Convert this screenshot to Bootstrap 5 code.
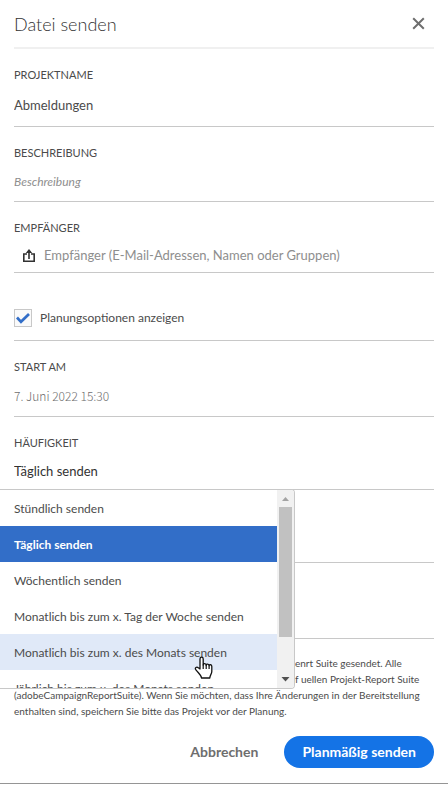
<!DOCTYPE html>
<html lang="de">
<head>
<meta charset="utf-8">
<meta name="viewport" content="width=device-width, initial-scale=1">
<title>Datei senden</title>
<link href="https://cdn.jsdelivr.net/npm/bootstrap@5.3.0/dist/css/bootstrap.min.css" rel="stylesheet">
<style>
body{font-family:Lato,"Noto Sans",sans-serif;font-size:13px;line-height:16px;color:#4b4b4b;background:#fff}
.dialog-box{padding:0 14px 15px;border-bottom:1px solid #959595}
.dialog-head{height:49px;border-bottom:2px solid #f0f0f0}
.dialog-title{font-size:18px;line-height:24px;font-weight:300;color:#323232}
.close-btn{line-height:0;margin-right:9px}
.field{padding-top:18px;border-bottom:1px solid #c8c8c8}
.field-label{display:block;font-size:11px;line-height:16px}
.field-row{height:41px}
.field-row.tall{height:43px}
.field-row.mid{height:40px}
.field-row.low{height:38px}
.field-row.short{height:36px}
.field input,.field select{appearance:none;background:none;border:0;padding:1px 0 0;width:100%;color:inherit;outline:0;font-size:13px;line-height:20px}
.field ::placeholder{color:#8e8e8e;opacity:1}
.field .descr{font-size:12px;font-style:italic}
.field .date{color:#6e6e6e;font-family:"Noto Sans CJK SC",sans-serif;font-size:12px;font-weight:300}
.field select{color:#323232}
.check-row{height:68px;padding-top:23px;border-bottom:1px solid #c8c8c8}
.check-row label{font-size:12px}
.check-row input{appearance:none;width:18px;height:18px;margin:0;border:1px solid #c8c8c8;background:#fafafa url("data:image/svg+xml,%3Csvg xmlns='http://www.w3.org/2000/svg' viewBox='0 0 16 16'%3E%3Cpath d='M2 7.5L6 11.8L14 4' fill='none' stroke='%23326ec8' stroke-width='2.7'/%3E%3C/svg%3E") center/16px}
.blank-field{height:73px;border-bottom:1px solid #c8c8c8}
.blank-field.last{height:76px}
.menu{position:absolute;z-index:2;top:100%;left:-14px;width:295px;height:200px;background:#fff;border:solid #c8c8c8;border-width:1px 1px 1px 0;border-radius:0 4px 4px 0;overflow:hidden}
.menu button{display:block;width:100%;height:36px;padding:2px 14px 0;border:0;background:none;text-align:left;font-size:12px;color:#4b4b4b;white-space:nowrap}
.menu .chosen{background:#326ec8;color:#fff;font-weight:700}
.menu .hovered{background:#e0e9f8}
.bar{width:17px;background:#f1f1f1}
.bar svg{display:block}
.thumb{width:13px;height:130px;background:#c1c1c1}
.pointer{position:absolute;z-index:3;left:180px;top:166px}
.note{padding-top:16px;font-size:10px;line-height:16px}
.note .behind{padding-left:281px;white-space:nowrap}
.actions{padding-top:17px}
.actions .btn{font-size:14px;line-height:22px;font-weight:700;padding:5px 18px;border-radius:16px}
.btn-cancel{color:#6e6e6e}
.btn-send{background:#1473e6;color:#fff}
</style>
</head>
<body>
<main class="dialog-box">
  <header class="dialog-head d-flex align-items-center justify-content-between">
    <h1 class="dialog-title m-0">Datei senden</h1>
    <button type="button" class="close-btn btn p-0 border-0" aria-label="Schließen"><svg width="13" height="13" viewBox="0 0 13 13"><path d="M1.2 1.2l10.6 10.6M11.8 1.2L1.2 11.8" stroke="#6e6e6e" stroke-width="2"/></svg></button>
  </header>
  <form>
    <div class="field">
      <label class="field-label" for="name">PROJEKTNAME</label>
      <div class="field-row tall d-flex align-items-center"><input type="text" id="name" value="Abmeldungen"></div>
    </div>
    <div class="field">
      <label class="field-label" for="descr">BESCHREIBUNG</label>
      <div class="field-row mid d-flex align-items-center"><input type="text" class="descr" id="descr" placeholder="Beschreibung"></div>
    </div>
    <div class="field">
      <label class="field-label" for="to">EMPFÄNGER</label>
      <div class="field-row short d-flex align-items-center gap-2 ps-2">
        <svg class="flex-shrink-0 mt-1" width="14" height="14" viewBox="0 0 14 14"><path d="M5 5H1.800v7.200h10.400V5H9M7 10V2.500" fill="none" stroke="#323232" stroke-width="1.600"/><path d="M7 0l3.200 4H3.800z" fill="#323232"/></svg>
        <input type="text" id="to" placeholder="Empfänger (E-Mail-Adressen, Namen oder Gruppen)">
      </div>
    </div>
    <div class="check-row d-flex align-items-center gap-2">
      <input type="checkbox" id="plan" checked><label for="plan">Planungsoptionen anzeigen</label>
    </div>
    <div class="field">
      <label class="field-label" for="start">START AM</label>
      <div class="field-row d-flex align-items-center"><input type="text" class="date" id="start" value="7. Juni 2022 15:30"></div>
    </div>
    <div class="field position-relative">
      <label class="field-label" for="freq">HÄUFIGKEIT</label>
      <div class="field-row low d-flex align-items-center"><select id="freq"><option>Täglich senden</option></select></div>
      <div class="menu d-flex">
        <div class="flex-grow-1" role="listbox" aria-label="Häufigkeit">
          <button type="button" role="option">Stündlich senden</button>
          <button type="button" role="option" class="chosen" aria-selected="true">Täglich senden</button>
          <button type="button" role="option">Wöchentlich senden</button>
          <button type="button" role="option">Monatlich bis zum x. Tag der Woche senden</button>
          <button type="button" role="option" class="hovered">Monatlich bis zum x. des Monats senden</button>
          <button type="button" role="option">Jährlich bis zum x. des Monats senden</button>
        </div>
        <div class="bar d-flex flex-column align-items-center justify-content-between" aria-hidden="true">
          <div><svg width="13" height="17" viewBox="0 0 13 17"><path d="M3 11h7L6.500 7z" fill="#a3a3a3"/></svg><div class="thumb"></div></div>
          <svg width="13" height="17" viewBox="0 0 13 17"><path d="M2.500 6h8L6.500 10.500z" fill="#505050"/></svg>
        </div>
      </div>
    </div>
    <div class="blank-field position-relative">
      <svg class="pointer" width="20" height="24" viewBox="0 0 20 24" aria-hidden="true"><path d="M6 13V3c0-2.400 3.200-2.400 3.200 0v6c0-2 3-1.700 3 .3 0-1.900 2.900-1.500 2.900.4 0-1.600 2.700-1.200 2.700.8v5c0 2.700-2 3.500-2 6.500H7.500c0-2.700-2.700-4.500-5.600-8.200-1.500-2 .8-3.600 2.400-2z" fill="#fff" stroke="#111" stroke-width="1.300" stroke-linejoin="round"/><path d="M9.200 8.500V13M12.200 9v4M15.100 9.500V13" stroke="#111" stroke-width="1.200"/></svg>
    </div>
    <div class="blank-field last"></div>
    <div class="note">
      <div class="behind">enrt Suite gesendet. Alle</div>
      <div class="behind">f uellen Projekt-Report Suite</div>
      <div>(adobeCampaignReportSuite). Wenn Sie möchten, dass Ihre Änderungen in der Bereitstellung enthalten sind, speichern Sie bitte das Projekt vor der Planung.</div>
    </div>
    <div class="actions d-flex justify-content-end align-items-center gap-2">
      <button type="button" class="btn btn-cancel border-0">Abbrechen</button>
      <button type="submit" class="btn btn-send border-0">Planmäßig senden</button>
    </div>
  </form>
</main>
<script src="https://cdn.jsdelivr.net/npm/bootstrap@5.3.0/dist/js/bootstrap.bundle.min.js"></script>
</body>
</html>
